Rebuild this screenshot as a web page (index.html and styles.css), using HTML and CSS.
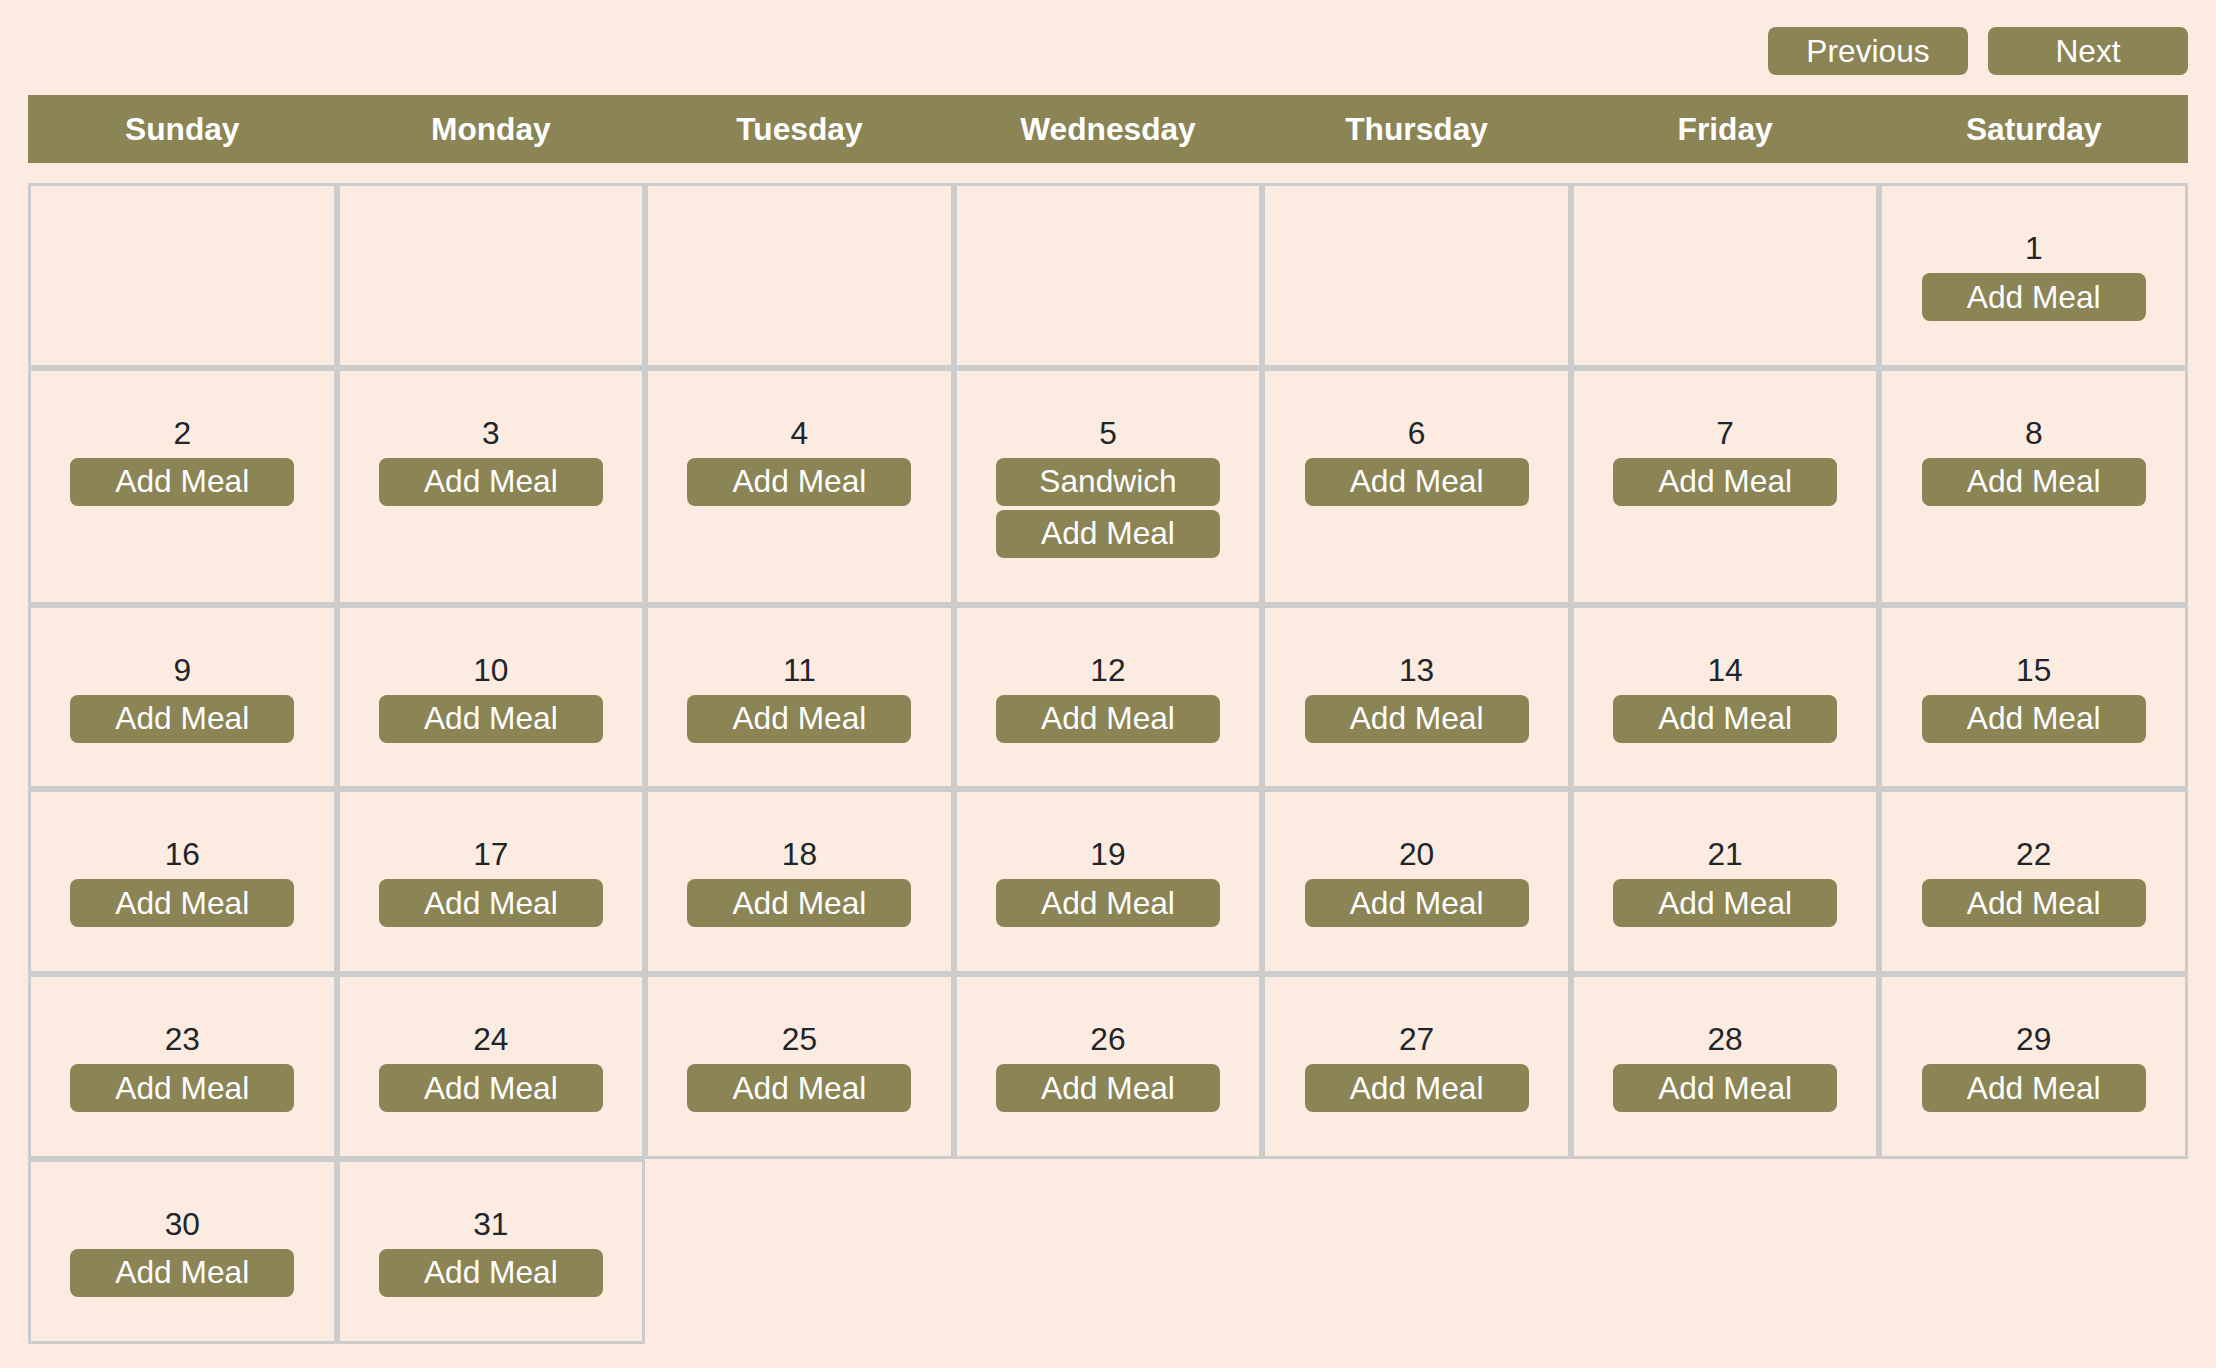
FILE: index.html
```html
<!DOCTYPE html>
<html lang="en">
<head>
<meta charset="utf-8">
<title>Meal Calendar</title>
<link rel="stylesheet" href="styles.css">
</head>
<body>
<div class="page">
  <div class="nav">
    <button class="btn nav-btn">Previous</button>
    <button class="btn nav-btn">Next</button>
  </div>
  <div class="weekdays">
    <div>Sunday</div><div>Monday</div><div>Tuesday</div><div>Wednesday</div><div>Thursday</div><div>Friday</div><div>Saturday</div>
  </div>
  <div class="grid">
    <div class="cell"></div><div class="cell"></div><div class="cell"></div><div class="cell"></div><div class="cell"></div><div class="cell"></div>
    <div class="cell"><div class="num">1</div><button class="btn meal">Add Meal</button></div>
    <div class="cell"><div class="num">2</div><button class="btn meal">Add Meal</button></div>
    <div class="cell"><div class="num">3</div><button class="btn meal">Add Meal</button></div>
    <div class="cell"><div class="num">4</div><button class="btn meal">Add Meal</button></div>
    <div class="cell"><div class="num">5</div><button class="btn meal">Sandwich</button><button class="btn meal">Add Meal</button></div>
    <div class="cell"><div class="num">6</div><button class="btn meal">Add Meal</button></div>
    <div class="cell"><div class="num">7</div><button class="btn meal">Add Meal</button></div>
    <div class="cell"><div class="num">8</div><button class="btn meal">Add Meal</button></div>
    <div class="cell"><div class="num">9</div><button class="btn meal">Add Meal</button></div>
    <div class="cell"><div class="num">10</div><button class="btn meal">Add Meal</button></div>
    <div class="cell"><div class="num">11</div><button class="btn meal">Add Meal</button></div>
    <div class="cell"><div class="num">12</div><button class="btn meal">Add Meal</button></div>
    <div class="cell"><div class="num">13</div><button class="btn meal">Add Meal</button></div>
    <div class="cell"><div class="num">14</div><button class="btn meal">Add Meal</button></div>
    <div class="cell"><div class="num">15</div><button class="btn meal">Add Meal</button></div>
    <div class="cell"><div class="num">16</div><button class="btn meal">Add Meal</button></div>
    <div class="cell"><div class="num">17</div><button class="btn meal">Add Meal</button></div>
    <div class="cell"><div class="num">18</div><button class="btn meal">Add Meal</button></div>
    <div class="cell"><div class="num">19</div><button class="btn meal">Add Meal</button></div>
    <div class="cell"><div class="num">20</div><button class="btn meal">Add Meal</button></div>
    <div class="cell"><div class="num">21</div><button class="btn meal">Add Meal</button></div>
    <div class="cell"><div class="num">22</div><button class="btn meal">Add Meal</button></div>
    <div class="cell"><div class="num">23</div><button class="btn meal">Add Meal</button></div>
    <div class="cell"><div class="num">24</div><button class="btn meal">Add Meal</button></div>
    <div class="cell"><div class="num">25</div><button class="btn meal">Add Meal</button></div>
    <div class="cell"><div class="num">26</div><button class="btn meal">Add Meal</button></div>
    <div class="cell"><div class="num">27</div><button class="btn meal">Add Meal</button></div>
    <div class="cell"><div class="num">28</div><button class="btn meal">Add Meal</button></div>
    <div class="cell"><div class="num">29</div><button class="btn meal">Add Meal</button></div>
    <div class="cell"><div class="num">30</div><button class="btn meal">Add Meal</button></div>
    <div class="cell"><div class="num">31</div><button class="btn meal">Add Meal</button></div>
  </div>
</div>
</body>
</html>
```
FILE: styles.css
```css
* { box-sizing: border-box; }
html, body {
  margin: 0;
  padding: 0;
  background: #fbebe0;
}
body {
  font-family: "Liberation Sans", Arial, Helvetica, sans-serif;
  font-size: 31.7px;
  color: #212529;
}
.page {
  padding: 27px 28px 20px;
  display: flex;
  flex-direction: column;
  gap: 20px;
}
.nav {
  display: flex;
  justify-content: flex-end;
  gap: 20px;
}
.btn {
  font-family: inherit;
  font-size: 31.7px;
  color: #fff;
  background: #8b8455;
  border: none;
  border-radius: 8px;
  height: 48px;
  padding: 0;
  display: flex;
  align-items: center;
  justify-content: center;
  cursor: pointer;
}
.nav-btn { width: 200px; }
.weekdays {
  display: grid;
  grid-template-columns: repeat(7, 1fr);
  background: #8b8455;
  height: 68px;
  align-items: center;
  color: #fff;
  font-weight: bold;
  text-align: center;
}
.grid {
  display: grid;
  grid-template-columns: repeat(7, 1fr);
}
.cell {
  border: 3px solid #ccc;
  padding: 44px 0 43.8px;
  display: flex;
  flex-direction: column;
  align-items: center;
  justify-content: flex-start;
  gap: 4px;
}
.num {
  margin-bottom: 2px;
}
.meal { width: 224px; }
```
